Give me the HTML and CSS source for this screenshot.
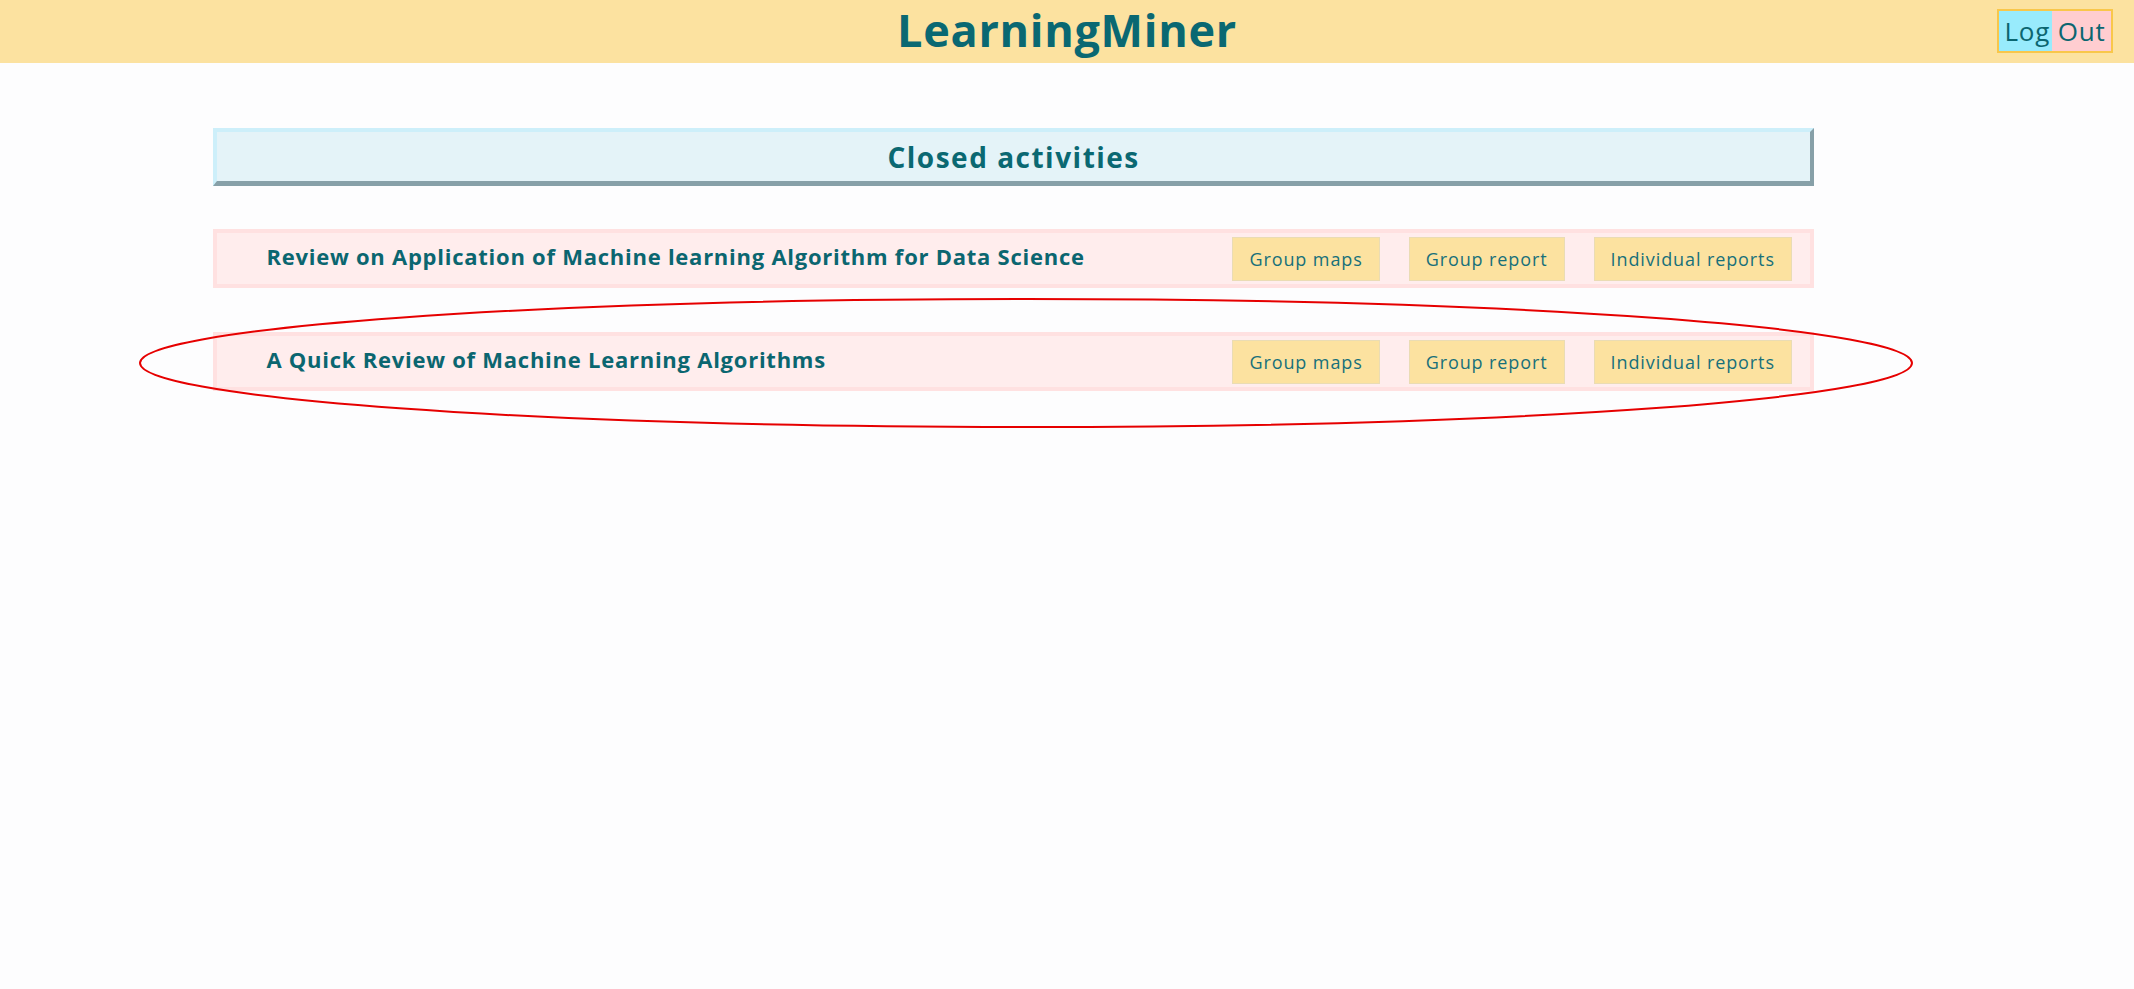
FILE: index.html
```html
<!DOCTYPE html>
<html lang="en">
<head>
<meta charset="utf-8">
<title>LearningMiner</title>
<link rel="stylesheet" href="styles.css">
</head>
<body>
<header class="topbar">
  <div class="topbar-side"></div>
  <h1 class="brand">LearningMiner</h1>
  <div class="topbar-side topbar-right">
    <button class="logout">Log Out</button>
  </div>
</header>
<main class="content">
  <h2 class="section-title">Closed activities</h2>
  <ul class="activity-list">
    <li class="activity">
      <span class="activity-name">Review on Application of Machine learning Algorithm for Data Science</span>
      <div class="activity-actions">
        <button class="action">Group maps</button>
        <button class="action">Group report</button>
        <button class="action">Individual reports</button>
      </div>
    </li>
    <li class="activity">
      <span class="activity-name">A Quick Review of Machine Learning Algorithms</span>
      <div class="activity-actions">
        <button class="action">Group maps</button>
        <button class="action">Group report</button>
        <button class="action">Individual reports</button>
      </div>
    </li>
  </ul>
</main>
<svg class="annotation" width="2134" height="989" viewBox="0 0 2134 989" aria-hidden="true">
  <ellipse cx="1026" cy="363" rx="886" ry="64" fill="none" stroke="#e60000" stroke-width="2"/>
</svg>
</body>
</html>
```
FILE: styles.css
```css
* { box-sizing: border-box; }

html, body {
  margin: 0;
  padding: 0;
}

body {
  background: #fdfdfe;
  font-family: "Open Sans", "Noto Sans", sans-serif;
  color: #0b6670;
  position: relative;
  min-height: 989px;
}

.topbar {
  height: 63px;
  background: #fce2a0;
  display: grid;
  grid-template-columns: 1fr auto 1fr;
  align-items: center;
}

.brand {
  margin: 0;
  font-size: 45px;
  font-weight: 700;
  color: #0a6872;
  line-height: 1;
  padding-bottom: 4px;
  letter-spacing: 0.7px;
}

.topbar-right {
  display: flex;
  justify-content: flex-end;
  padding-right: 21px;
  padding-bottom: 2px;
}

.logout {
  width: 116px;
  height: 44px;
  border: 2px solid #f9c74a;
  background: linear-gradient(to right, #98ebfc 0, #98ebfc 47%, #ffcdd0 47%, #ffcdd0 100%);
  font-family: "Open Sans", "Noto Sans", sans-serif;
  font-size: 26px;
  font-weight: 500;
  color: #0b6670;
  padding: 0;
  cursor: pointer;
  letter-spacing: 0.8px;
  white-space: nowrap;
}

.content {
  margin: 65px 0 0 10%;
  width: 75%;
}

.section-title {
  margin: 0;
  height: 58px;
  display: flex;
  align-items: center;
  justify-content: center;
  background: #e4f3f8;
  border-style: solid;
  border-width: 4px 4px 5px 4px;
  border-color: #cdeffa #87a0a8 #87a0a8 #cdeffa;
  font-size: 28px;
  font-weight: 700;
  color: #0a6872;
  letter-spacing: 1.5px;
}

.activity-list {
  list-style: none;
  margin: 43px 0 0;
  padding: 0;
  display: flex;
  flex-direction: column;
  gap: 44px;
}

.activity {
  height: 59px;
  display: flex;
  align-items: center;
  background: #ffeded;
  border: 4px solid #ffe1e1;
  padding: 0 18px 0 49px;
}

.activity-name {
  font-size: 22px;
  font-weight: 700;
  color: #0b6670;
  margin-bottom: 5px;
  letter-spacing: 0.75px;
}

.activity-actions {
  margin-left: auto;
  display: flex;
  gap: 29px;
}

.action {
  height: 44px;
  padding: 0 16px;
  background: #fce2a0;
  border: 1px solid #eadcb4;
  font-family: "Open Sans", "Noto Sans", sans-serif;
  font-size: 18px;
  font-weight: 500;
  color: #17707a;
  cursor: pointer;
  letter-spacing: 0.9px;
}

.annotation {
  position: absolute;
  top: 0;
  left: 0;
  pointer-events: none;
}
```
